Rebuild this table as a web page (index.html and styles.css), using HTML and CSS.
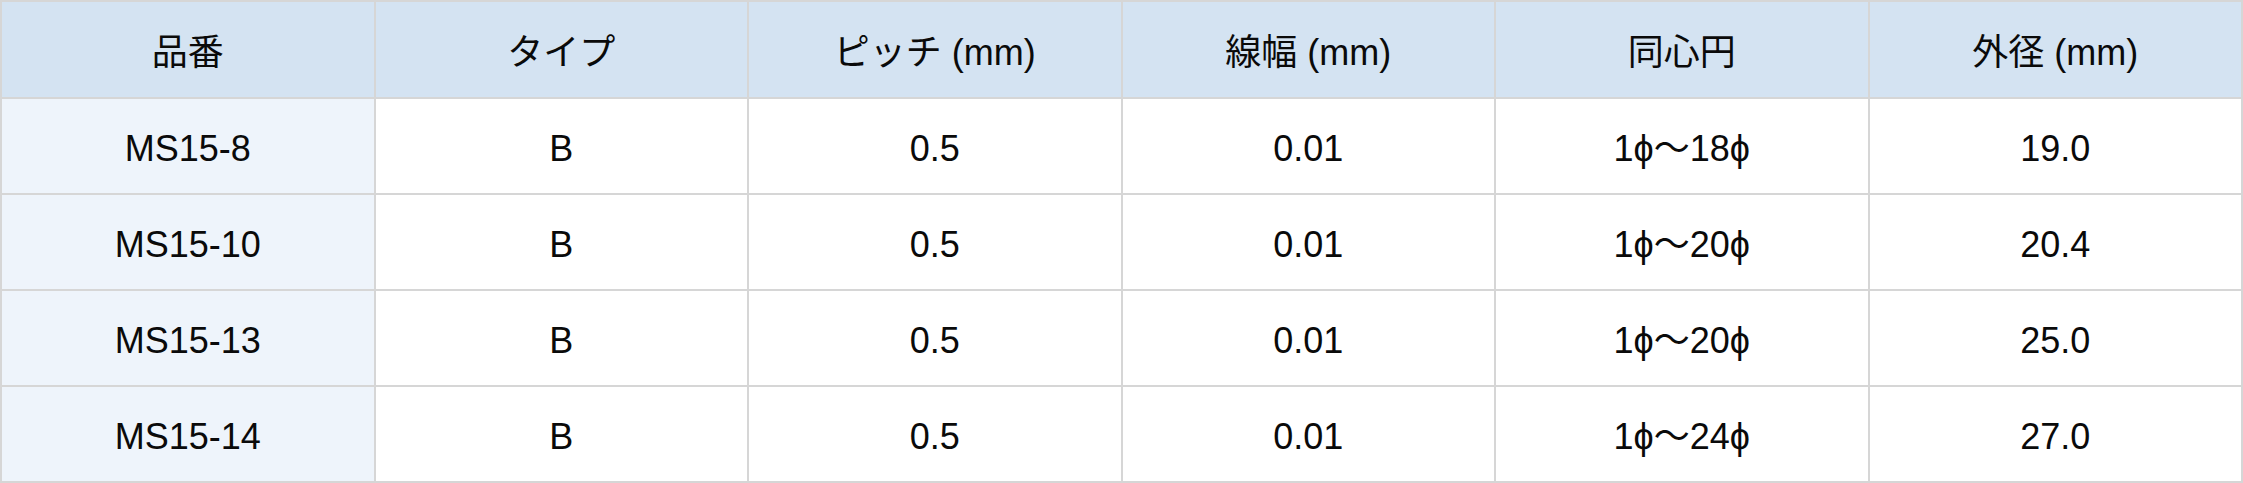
FILE: index.html
```html
<!DOCTYPE html>
<html lang="ja">
<head>
<meta charset="utf-8">
<title>MS15 仕様表</title>
<link rel="stylesheet" href="styles.css">
</head>
<body>
<table class="spec">
  <thead>
    <tr>
      <th>品番</th>
      <th>タイプ</th>
      <th>ピッチ (mm)</th>
      <th>線幅 (mm)</th>
      <th>同心円</th>
      <th>外径 (mm)</th>
    </tr>
  </thead>
  <tbody>
    <tr>
      <td class="code">MS15-8</td>
      <td class="type">B</td>
      <td>0.5</td>
      <td>0.01</td>
      <td>1ϕ〜18ϕ</td>
      <td>19.0</td>
    </tr>
    <tr>
      <td class="code">MS15-10</td>
      <td class="type">B</td>
      <td>0.5</td>
      <td>0.01</td>
      <td>1ϕ〜20ϕ</td>
      <td>20.4</td>
    </tr>
    <tr>
      <td class="code">MS15-13</td>
      <td class="type">B</td>
      <td>0.5</td>
      <td>0.01</td>
      <td>1ϕ〜20ϕ</td>
      <td>25.0</td>
    </tr>
    <tr>
      <td class="code">MS15-14</td>
      <td class="type">B</td>
      <td>0.5</td>
      <td>0.01</td>
      <td>1ϕ〜24ϕ</td>
      <td>27.0</td>
    </tr>
  </tbody>
</table>
</body>
</html>
```

FILE: styles.css
```css
html, body {
  margin: 0;
  padding: 0;
  background: #ffffff;
}

.spec {
  width: 2243px;
  border-collapse: collapse;
  table-layout: fixed;
  font-family: "Liberation Sans", "Noto Sans CJK JP", sans-serif;
  font-size: 36px;
  line-height: 40px;
  color: #0a0a0a;
}

.spec th,
.spec td {
  border: 2px solid #d6d6d6;
  padding: 6px 0 0;
  text-align: center;
  vertical-align: middle;
  font-weight: normal;
}

.spec th {
  height: 89px;
  background: #d4e3f2;
}

.spec td {
  height: 88px;
  background: #ffffff;
}

.spec td.code {
  background: #eef4fb;
}

.spec td.type {
  font-family: "Liberation Sans", sans-serif;
}
```
